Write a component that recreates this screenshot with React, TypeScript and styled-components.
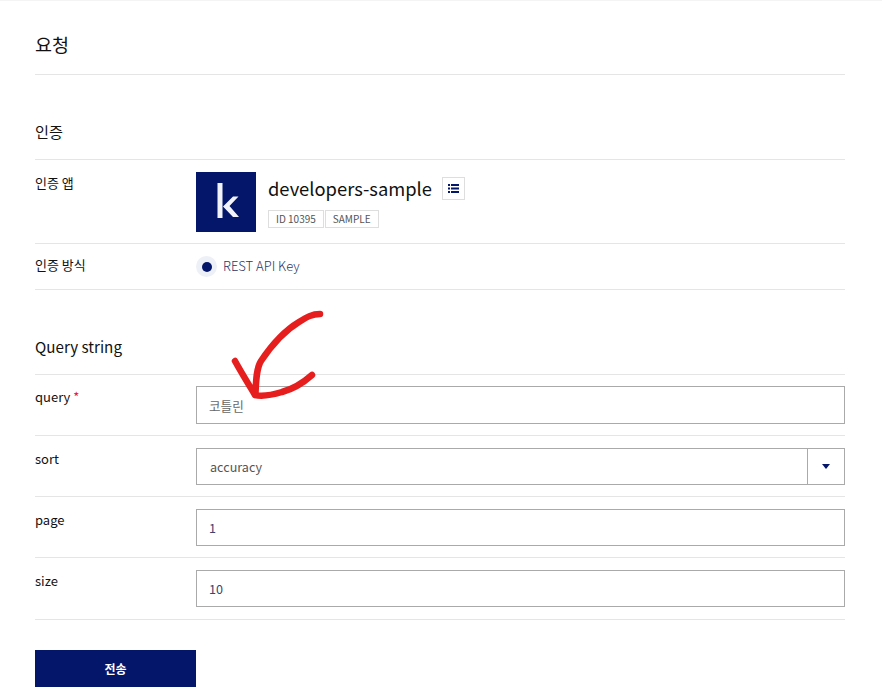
import React from "react";
import styled, { createGlobalStyle } from "styled-components";

const Global = createGlobalStyle`
  html, body { margin: 0; padding: 0; background: #fff; }
  body { font-family: "Noto Sans CJK KR", "Noto Sans", sans-serif; color: #111; }
`;

const Page = styled.div`
  position: relative;
  width: 882px;
  height: 696px;
  overflow: hidden;
  box-sizing: border-box;
  border-top: 1px solid #f4f4f4;
  padding: 0 37px 0 35px;
`;
const Title = styled.h1`
  margin: 0;
  height: 74px;
  box-sizing: border-box;
  padding-top: 29px;
  font-size: 18.5px;
  line-height: 28px;
  font-weight: 400;
  color: #111;
  border-bottom: 1px solid #e5e5e5;
`;
const SectionTitle = styled.h2`
  margin: 0;
  box-sizing: border-box;
  height: 85px;
  display: flex;
  align-items: flex-end;
  padding-bottom: 17px;
  font-size: 15.2px;
  line-height: 22px;
  font-weight: 400;
  color: #111;
  border-bottom: 1px solid #e5e5e5;
`;
const Row = styled.div<{ $height: number }>`
  display: grid;
  grid-template-columns: 161px 1fr;
  height: ${(p) => p.$height}px;
  box-sizing: border-box;
  border-bottom: 1px solid #e5e5e5;
`;
const Label = styled.div<{ $top: number }>`
  padding-top: ${(p) => p.$top}px;
  font-size: 13px;
  line-height: 20px;
  color: #111;
`;
const Required = styled.span`
  color: #e61e2a;
  margin-left: 3px;
`;
const Cell = styled.div`
  display: flex;
  align-items: center;
`;
const FieldCell = styled.div`
  display: block;
`;
const Logo = styled.div`
  width: 60px;
  height: 60px;
  background: #03166a;
  flex: none;
`;
const LogoArt = styled.svg`
  display: block;
`;
const AppInfo = styled.div`
  margin-left: 12px;
  display: flex;
  flex-direction: column;
  gap: 6px;
`;
const AppNameRow = styled.div`
  display: flex;
  align-items: center;
  gap: 10px;
`;
const AppName = styled.span`
  font-size: 18.35px;
  line-height: 24px;
  margin-bottom: 4px;
  color: #111;
`;
const ListButton = styled.button`
  width: 23px;
  height: 23px;
  padding: 0;
  margin-bottom: 2px;
  background: #fff;
  border: 1px solid #dedede;
  display: flex;
  align-items: center;
  justify-content: center;
`;
const Tags = styled.div`
  display: flex;
  gap: 1px;
`;
const Tag = styled.span`
  box-sizing: border-box;
  height: 18px;
  padding: 0 7px;
  border: 1px solid #dedede;
  font-size: 10px;
  line-height: 16px;
  color: #555;
`;
const RadioOuter = styled.span`
  width: 21px;
  height: 21px;
  border-radius: 50%;
  background: #eef0f7;
  display: flex;
  align-items: center;
  justify-content: center;
`;
const RadioDot = styled.span`
  width: 10px;
  height: 10px;
  border-radius: 50%;
  background: #03166a;
`;
const RadioLabel = styled.span`
  margin-left: 6px;
  margin-bottom: 2px;
  font-size: 13px;
  line-height: 20px;
  font-weight: 300;
  color: #2c3566;
`;
const Field = styled.div<{ $color?: string; $top?: number; $height?: number; $pad?: number }>`
  width: 100%;
  height: ${(p) => p.$height ?? 37}px;
  margin-top: ${(p) => p.$top ?? 12}px;
  box-sizing: border-box;
  border: 1px solid #aaa;
  padding-left: ${(p) => p.$pad ?? 12}px;
  display: flex;
  align-items: center;
  justify-content: space-between;
  font-size: 12.6px;
  color: ${(p) => p.$color || "#3c4470"};
`;
const Caret = styled.span`
  width: 36px;
  height: 100%;
  border-left: 1px solid #aaa;
  display: flex;
  align-items: center;
  justify-content: center;
`;
const Triangle = styled.span`
  width: 0;
  height: 0;
  border-left: 4px solid transparent;
  border-right: 4px solid transparent;
  border-top: 5px solid #03166a;
`;
const Submit = styled.button`
  display: block;
  margin-top: 30px;
  width: 161px;
  height: 37px;
  border: none;
  background: #03166a;
  color: #fff;
  font-family: inherit;
  font-size: 12px;
  font-weight: 700;
`;
const Scribble = styled.svg`
  position: absolute;
  left: 0;
  top: 0;
  pointer-events: none;
`;

export default function App() {
  return (
    <Page>
      <Global />
      <Title>요청</Title>
      <SectionTitle>인증</SectionTitle>
      <Row $height={84}>
        <Label $top={13}>인증 앱</Label>
        <Cell>
          <Logo>
            <LogoArt width="60" height="60" viewBox="0 0 60 60">
              <path d="M21.500 11h5v35h-5zM27 34.500 37 24.500h5.500L33.500 34 43 45h-6z" fill="#f2f3f8" />
            </LogoArt>
          </Logo>
          <AppInfo>
            <AppNameRow>
              <AppName>developers-sample</AppName>
              <ListButton aria-label="목록">
                <svg width="11" height="9" viewBox="0 0 11 9">
                  <path d="M0 0h2v2H0zM3 0h8v2H3zM0 3.500h2v2H0zM3 3.500h8v2H3zM0 7h2v2H0zM3 7h8v2H3z" fill="#03166a" />
                </svg>
              </ListButton>
            </AppNameRow>
            <Tags>
              <Tag>ID 10395</Tag>
              <Tag>SAMPLE</Tag>
            </Tags>
          </AppInfo>
        </Cell>
      </Row>
      <Row $height={46}>
        <Label $top={11}>인증 방식</Label>
        <Cell>
          <RadioOuter>
            <RadioDot />
          </RadioOuter>
          <RadioLabel>REST API Key</RadioLabel>
        </Cell>
      </Row>
      <SectionTitle>Query string</SectionTitle>
      <Row $height={61}>
        <Label $top={12}>
          query<Required>*</Required>
        </Label>
        <FieldCell>
          <Field $color="#666" $top={11} $height={38}>코틀린</Field>
        </FieldCell>
      </Row>
      <Row $height={61}>
        <Label $top={13}>sort</Label>
        <FieldCell>
          <Field $color="#555" $pad={13}>
            accuracy
            <Caret>
              <Triangle />
            </Caret>
          </Field>
        </FieldCell>
      </Row>
      <Row $height={61}>
        <Label $top={13}>page</Label>
        <FieldCell>
          <Field>1</Field>
        </FieldCell>
      </Row>
      <Row $height={62}>
        <Label $top={13}>size</Label>
        <FieldCell>
          <Field>10</Field>
        </FieldCell>
      </Row>
      <Submit>전송</Submit>
      <Scribble width="882" height="696" viewBox="0 0 882 696">
        <path
          d="M320 313C312 313 307 316 299 321C284 330 271 345 261 360C256 368 256 382 255.500 393M235 360C241 371 249 384 255 394C263 396 272 394 282 391C293 388 303 382 312 374"
          fill="none"
          stroke="#e61e1e"
          strokeWidth="6.500"
          strokeLinecap="round"
          strokeLinejoin="round"
        />
      </Scribble>
    </Page>
  );
}
